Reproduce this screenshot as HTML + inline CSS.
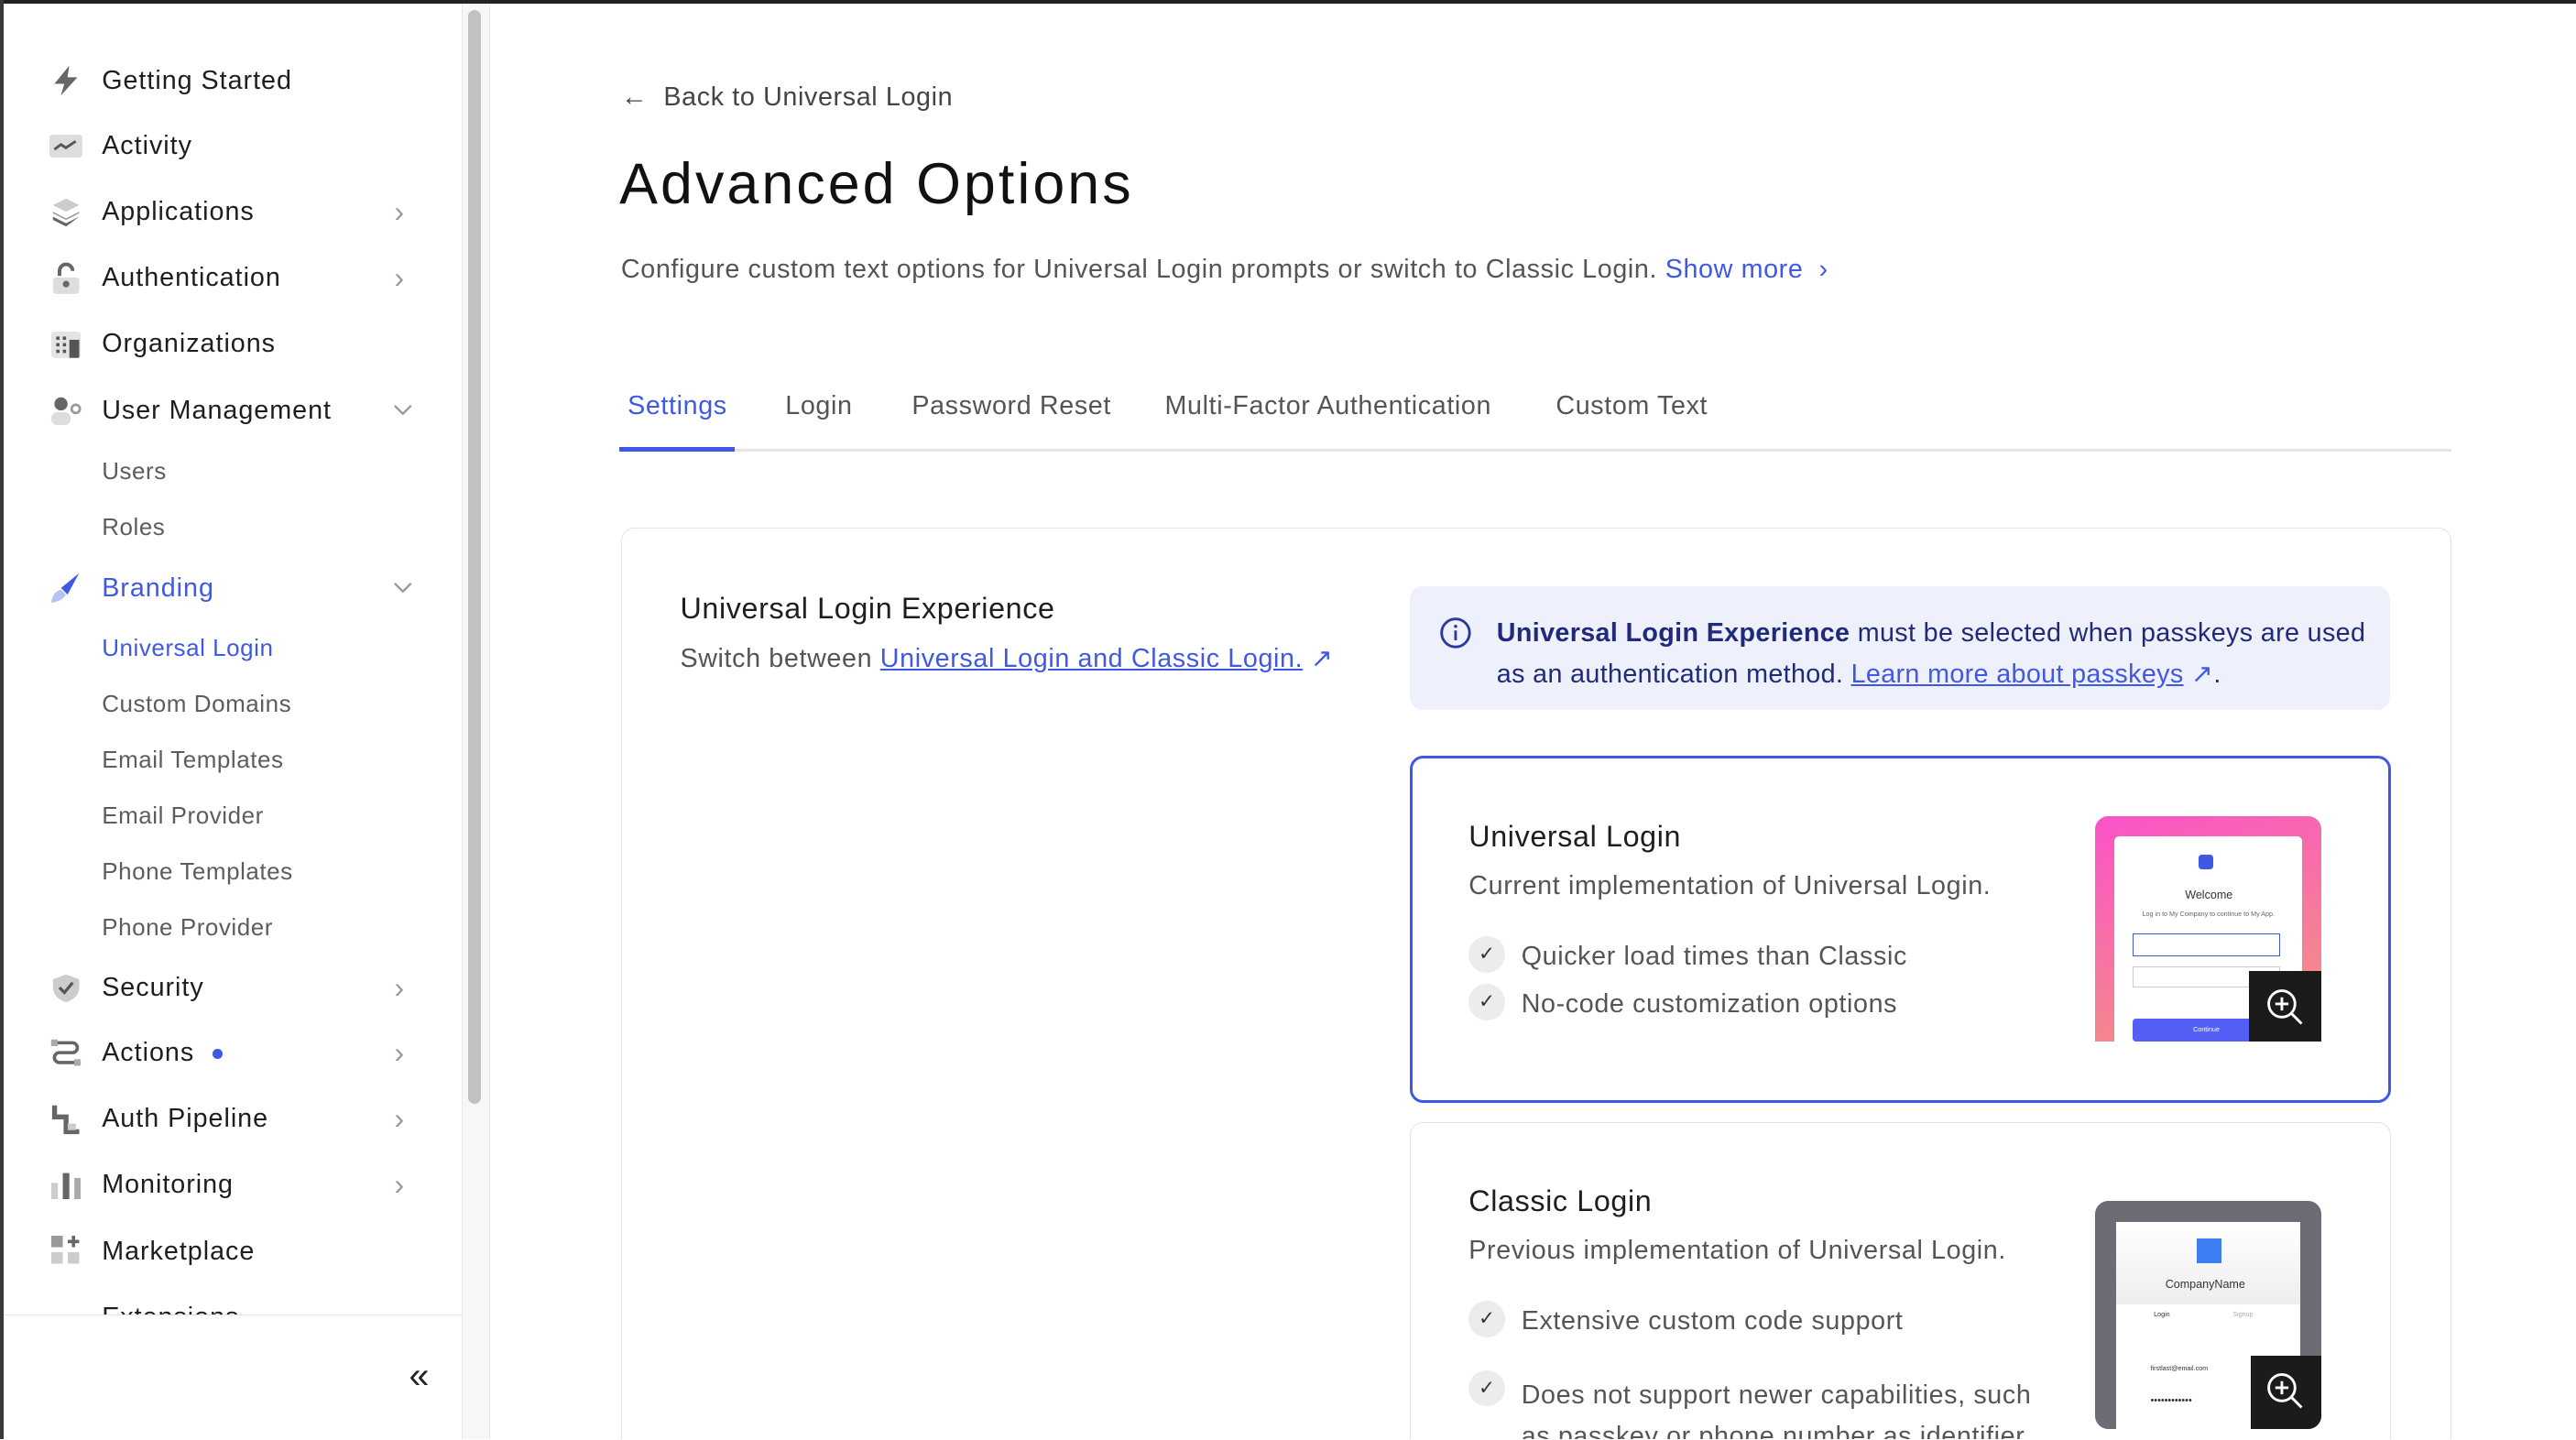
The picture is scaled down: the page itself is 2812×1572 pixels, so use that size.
<!DOCTYPE html>
<html><head><meta charset="utf-8"><style>
html,body{margin:0;padding:0;width:2812px;height:1572px;overflow:hidden;background:#fff}
#z{zoom:1.7934;width:1568px;height:876px;position:relative;font-family:"Liberation Sans",sans-serif;color:#1e1e1e;overflow:hidden;background:#fff;letter-spacing:0.35px}
.a{position:absolute;white-space:nowrap}
.top{left:0;top:0;width:1568px;height:2px;background:#222}
.lft{left:0;top:0;width:2px;height:877px;background:#3a3a3a}
.side{left:2px;top:2px;width:280px;height:875px;background:#fff}
.sb{left:281px;top:2px;width:16px;height:875px;background:#f7f7f7;border-left:1px solid #e8e8e8;border-right:1px solid #e6e6e6}
.thumb{left:285px;top:6px;width:8px;height:666px;background:#c2c2c2;border-radius:4px}
.ni{font-size:16px;color:#1e1e1e;left:62px;letter-spacing:0.55px}
.si{font-size:14.5px;color:#5d5d5d;left:62px;letter-spacing:0.3px}
.chev{left:240px;color:#999;font-size:18px;line-height:18px}
.foot{left:2px;top:800px;width:279px;height:77px;background:#fff;border-top:1px solid #e6e6e6}
.tab{top:238px;font-size:16px;color:#555}
.card{left:378px;top:321px;width:1113px;height:600px;border:1px solid #e3e3e3;border-radius:8px}
.chk{width:22px;height:22px;border-radius:50%;background:#ebedeb;text-align:center;font-size:12px;line-height:22px;color:#333;letter-spacing:0}
.li{font-size:16px;color:#555}
a{color:#3f59e4;text-decoration:underline}
</style></head><body><div id="z">
<div class="a side"></div>
<div class="a sb"></div><div class="a thumb"></div>

<svg class="a" style="left:30px;top:39px" width="20" height="20" viewBox="0 0 20 20"><path d="M12 1 L3 12 H9 L7 19 L17 8 H11 Z" fill="#666"/></svg>
<svg class="a" style="left:30px;top:82px" width="20" height="14"><rect width="20" height="14" rx="2" fill="#ddd"/><path d="M3 9 L7 6 L10 8 L16 4" stroke="#555" stroke-width="1.6" fill="none"/></svg>
<svg class="a" style="left:31px;top:120px" width="18" height="18"><path d="M9 1 L17 5 L9 9 L1 5Z" fill="#ccc"/><path d="M1 9 L9 13 L17 9 L17 10 L9 14 L1 10Z" fill="#999"/><path d="M1 12 L9 16 L17 12 L9 18 L1 14Z" fill="#666"/></svg>
<svg class="a" style="left:31px;top:159px" width="18" height="20"><path d="M5 9 V6 a4 4 0 0 1 8 0" stroke="#666" stroke-width="2.2" fill="none"/><rect x="1" y="10" width="16" height="10" rx="2" fill="#ddd"/><circle cx="9" cy="14" r="2" fill="#666"/></svg>
<svg class="a" style="left:31px;top:202px" width="18" height="16"><rect width="18" height="16" rx="2" fill="#e4e4e4"/><g fill="#555"><rect x="3" y="3" width="2" height="2"/><rect x="7" y="3" width="2" height="2"/><rect x="3" y="7" width="2" height="2"/><rect x="7" y="7" width="2" height="2"/><rect x="3" y="11" width="2" height="2"/><rect x="7" y="11" width="2" height="2"/><rect x="11" y="5" width="6" height="11"/></g></svg>
<svg class="a" style="left:30px;top:241px" width="20" height="18"><circle cx="7" cy="5" r="4" fill="#666"/><rect x="1" y="10" width="12" height="8" rx="4" fill="#ddd"/><circle cx="16" cy="8" r="2.5" fill="none" stroke="#999" stroke-width="1.5"/></svg>
<svg class="a" style="left:30px;top:348px" width="20" height="20"><path d="M18 1 L7 10 L11 14Z" fill="#3f59e4"/><path d="M7 11 Q2 12 1 19 Q8 18 10 14Z" fill="#b8c2f5"/></svg>
<svg class="a" style="left:31px;top:592px" width="18" height="18"><path d="M9 1 L17 4 V9 Q17 15 9 18 Q1 15 1 9 V4Z" fill="#ccc"/><path d="M5 9 L8 12 L13 6" stroke="#555" stroke-width="1.8" fill="none"/></svg>
<svg class="a" style="left:30px;top:632px" width="20" height="20"><path d="M3 3 H14 a3 3 0 0 1 0 6 H6 a3 3 0 0 0 0 6 H17" stroke="#666" stroke-width="2" fill="none"/><rect x="1" y="1" width="4" height="4" fill="#aaa"/><rect x="15" y="13" width="4" height="4" fill="#aaa"/></svg>
<svg class="a" style="left:31px;top:672px" width="18" height="20"><path d="M2 1 V8 H9 V17 H17" stroke="#666" stroke-width="3" fill="none"/><rect x="10" y="12" width="5" height="4" fill="#ccc"/></svg>
<svg class="a" style="left:31px;top:712px" width="18" height="18"><rect x="0" y="8" width="4" height="10" fill="#ccc"/><rect x="7" y="2" width="4" height="16" fill="#666"/><rect x="14" y="5" width="4" height="13" fill="#aaa"/></svg>
<svg class="a" style="left:31px;top:752px" width="18" height="18"><rect x="0" y="0" width="7" height="7" fill="#999"/><rect x="0" y="10" width="7" height="7" fill="#ccc"/><rect x="10" y="10" width="7" height="7" fill="#ccc"/><path d="M13.5 0 V7 M10 3.5 H17" stroke="#666" stroke-width="2"/></svg>

<div class="a ni" style="top:40px">Getting Started</div>
<div class="a ni" style="top:80px">Activity</div>
<div class="a ni" style="top:120px">Applications</div><div class="a chev" style="top:120px">&#8250;</div>
<div class="a ni" style="top:160px">Authentication</div><div class="a chev" style="top:160px">&#8250;</div>
<div class="a ni" style="top:200px">Organizations</div>
<div class="a ni" style="top:241px">User Management</div>
<svg class="a" style="left:239px;top:246px" width="12" height="8"><path d="M1 1 L6 6 L11 1" stroke="#999" stroke-width="1.3" fill="none"/></svg>
<div class="a si" style="top:278px">Users</div>
<div class="a si" style="top:312px">Roles</div>
<div class="a ni" style="top:349px;color:#3f59e4">Branding</div>
<svg class="a" style="left:239px;top:354px" width="12" height="8"><path d="M1 1 L6 6 L11 1" stroke="#999" stroke-width="1.3" fill="none"/></svg>
<div class="a si" style="top:386px;color:#3f59e4">Universal Login</div>
<div class="a si" style="top:420px">Custom Domains</div>
<div class="a si" style="top:454px">Email Templates</div>
<div class="a si" style="top:488px">Email Provider</div>
<div class="a si" style="top:522px">Phone Templates</div>
<div class="a si" style="top:556px">Phone Provider</div>
<div class="a ni" style="top:592px">Security</div><div class="a chev" style="top:592px">&#8250;</div>
<div class="a ni" style="top:632px">Actions <span style="display:inline-block;width:6px;height:6px;border-radius:50%;background:#3f59e4;margin-left:6px;vertical-align:middle"></span></div><div class="a chev" style="top:632px">&#8250;</div>
<div class="a ni" style="top:672px">Auth Pipeline</div><div class="a chev" style="top:672px">&#8250;</div>
<div class="a ni" style="top:712px">Monitoring</div><div class="a chev" style="top:712px">&#8250;</div>
<div class="a ni" style="top:753px">Marketplace</div>
<div class="a ni" style="top:793px">Extensions</div>
<div class="a foot"></div>
<div class="a" style="left:249px;top:825px;font-size:22px;color:#222">&laquo;</div>
<div class="a top"></div><div class="a lft"></div>

<div class="a" style="left:378px;top:50px;font-size:16px;color:#444">&larr;&nbsp; Back to Universal Login</div>
<div class="a" style="left:377px;top:92px;font-size:35px;color:#111;letter-spacing:1.7px">Advanced Options</div>
<div class="a" style="left:378px;top:155px;font-size:16px;color:#555">Configure custom text options for Universal Login prompts or switch to Classic Login. <span style="color:#3f59e4">Show more &nbsp;&#8250;</span></div>
<div class="a tab" style="left:382px;color:#3f59e4">Settings</div>
<div class="a tab" style="left:478px">Login</div>
<div class="a tab" style="left:555px">Password Reset</div>
<div class="a tab" style="left:709px">Multi-Factor Authentication</div>
<div class="a tab" style="left:947px">Custom Text</div>
<div class="a" style="left:377px;top:273px;width:1115px;height:2px;background:#e6e6e6"></div>
<div class="a" style="left:377px;top:272px;width:70px;height:3px;background:#3f59e4"></div>

<div class="a card"></div>
<div class="a" style="left:414px;top:360px;font-size:18px;color:#1e1e1e">Universal Login Experience</div>
<div class="a" style="left:414px;top:391px;font-size:16px;color:#555">Switch between <a>Universal Login and Classic Login.</a> <span style="color:#3f59e4">&#8599;</span></div>

<div class="a" style="left:858px;top:357px;width:597px;height:75px;background:#eef0fc;border-radius:8px"></div>
<svg class="a" style="left:876px;top:375px" width="20" height="20"><circle cx="10" cy="10" r="8.5" fill="none" stroke="#2a3a9a" stroke-width="1.6"/><rect x="9.2" y="8.5" width="1.6" height="6" fill="#2a3a9a"/><circle cx="10" cy="6" r="1" fill="#2a3a9a"/></svg>
<div class="a" style="left:911px;top:373px;font-size:16px;color:#1f2a7a;line-height:25px;letter-spacing:0.2px"><b>Universal Login Experience</b> must be selected when passkeys are used<br>as an authentication method. <a>Learn more about passkeys</a> <span style="color:#3f59e4">&#8599;</span>.</div>

<div class="a" style="left:858px;top:460px;width:594px;height:208px;border:2px solid #3f59e4;border-radius:8px"></div>
<div class="a" style="left:894px;top:499px;font-size:18px">Universal Login</div>
<div class="a" style="left:894px;top:530px;font-size:16px;color:#555">Current implementation of Universal Login.</div>
<div class="a chk" style="left:894px;top:570px">&#10003;</div><div class="a li" style="left:926px;top:573px">Quicker load times than Classic</div>
<div class="a chk" style="left:894px;top:599px">&#10003;</div><div class="a li" style="left:926px;top:602px">No-code customization options</div>
<div class="a" style="left:1275px;top:497px;width:138px;height:137px;border-radius:8px 8px 0 0;background:linear-gradient(160deg,#fb52c8,#f2987a);overflow:hidden;letter-spacing:0">
 <div class="a" style="left:12px;top:12px;width:114px;height:130px;background:#fff;border-radius:3px"></div>
 <div class="a" style="left:63px;top:23px;width:9px;height:9px;background:#3f59e4;border-radius:2px"></div>
 <div class="a" style="left:55px;top:44px;font-size:7px;color:#333">Welcome</div>
 <div class="a" style="left:29px;top:57px;font-size:4px;color:#666">Log in to My Company to continue to My App.</div>
 <div class="a" style="left:23px;top:71px;width:89px;height:13px;border:1px solid #3f59e4"></div>
 <div class="a" style="left:23px;top:91px;width:89px;height:12px;border:1px solid #ccc"></div>
 <div class="a" style="left:23px;top:123px;width:90px;height:14px;background:#5460f5;color:#fff;font-size:4px;text-align:center;line-height:14px;border-radius:2px">Continue</div>
 <div class="a" style="left:94px;top:94px;width:44px;height:43px;background:#1b1b1b"></div>
 <svg class="a" style="left:104px;top:104px" width="24" height="24"><circle cx="10" cy="10" r="8" fill="none" stroke="#fff" stroke-width="1.6"/><path d="M10 6V14M6 10H14M16 16L22 22" stroke="#fff" stroke-width="1.6"/></svg>
</div>

<div class="a" style="left:858px;top:683px;width:596px;height:300px;border:1px solid #e3e3e3;border-radius:8px"></div>
<div class="a" style="left:894px;top:721px;font-size:18px">Classic Login</div>
<div class="a" style="left:894px;top:752px;font-size:16px;color:#555">Previous implementation of Universal Login.</div>
<div class="a chk" style="left:894px;top:792px">&#10003;</div><div class="a li" style="left:926px;top:795px">Extensive custom code support</div>
<div class="a chk" style="left:894px;top:834px">&#10003;</div><div class="a li" style="left:926px;top:837px;line-height:25px">Does not support newer capabilities, such<br>as passkey or phone number as identifier</div>
<div class="a" style="left:1275px;top:731px;width:138px;height:139px;border-radius:8px;background:#6b6c74;overflow:hidden;letter-spacing:0">
 <div class="a" style="left:13px;top:13px;width:112px;height:130px;background:#fff"></div>
 <div class="a" style="left:13px;top:13px;width:112px;height:50px;background:linear-gradient(#fff,#eee)"></div>
 <div class="a" style="left:62px;top:23px;width:15px;height:15px;background:#3d7ef5"></div>
 <div class="a" style="left:43px;top:47px;font-size:7px;color:#333">CompanyName</div>
 <div class="a" style="left:36px;top:67px;font-size:4px;color:#333">Login</div>
 <div class="a" style="left:84px;top:67px;font-size:4px;color:#aaa">Signup</div>
 <div class="a" style="left:34px;top:100px;font-size:4px;color:#333">firstlast@email.com</div>
 <div class="a" style="left:34px;top:118px;font-size:6px;color:#333">••••••••••••</div>
 <div class="a" style="left:95px;top:94px;width:43px;height:45px;background:#1b1b1b"></div>
 <svg class="a" style="left:104px;top:104px" width="24" height="24"><circle cx="10" cy="10" r="8" fill="none" stroke="#fff" stroke-width="1.6"/><path d="M10 6V14M6 10H14M16 16L22 22" stroke="#fff" stroke-width="1.6"/></svg>
</div>
</div></body></html>
